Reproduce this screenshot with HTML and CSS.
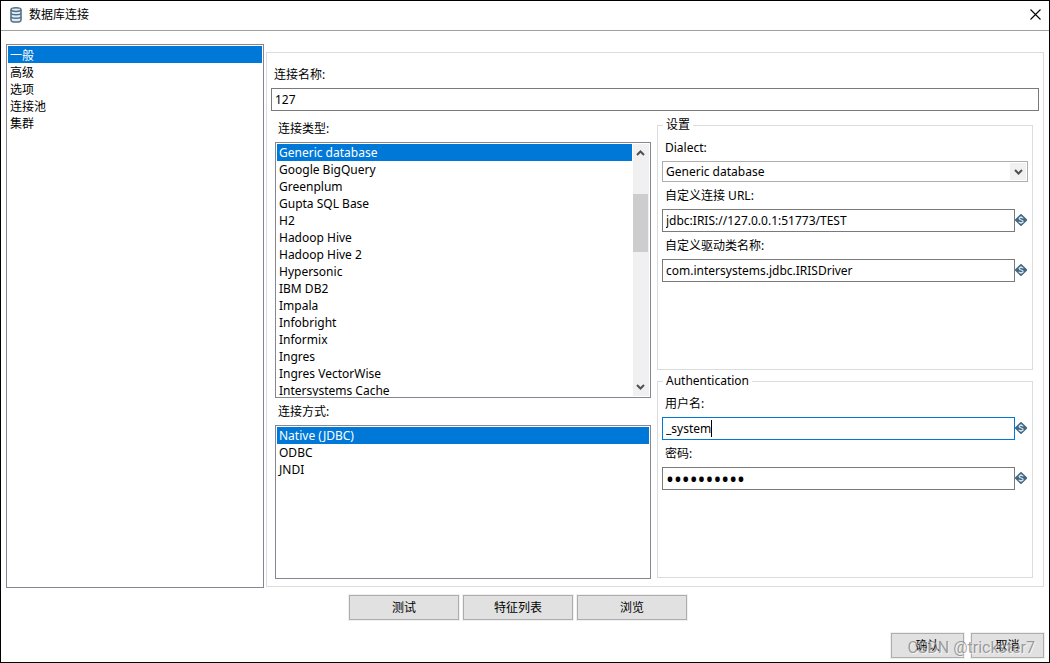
FILE: index.html
```html
<!DOCTYPE html>
<html lang="zh-CN">
<head>
<meta charset="utf-8">
<title>数据库连接</title>
<link rel="stylesheet" href="styles.css">
</head>
<body>
<svg class="defs" aria-hidden="true">
  <symbol id="variable" viewBox="0 0 13 13">
    <path d="M6 1 11.2 6 6 11 0.8 6Z" fill="#426883" stroke="#426883" stroke-width="1.8" stroke-linejoin="round"/>
    <path d="M8.2 4.4C7.8 3 4.1 2.9 4.1 4.6 4.1 6.3 8.1 5.7 8.1 7.4 8.1 9.1 4.4 9 3.8 7.7M6 2V3.4M6 8.6V10" fill="none" stroke="#dbe5ec" stroke-width="1.2"/>
  </symbol>
  <symbol id="down" viewBox="0 0 9 6"><path d="M1 1 4.5 4.5 8 1" fill="none" stroke="#505050" stroke-width="2"/></symbol>
  <symbol id="up" viewBox="0 0 9 6"><path d="M1 5 4.5 1.5 8 5" fill="none" stroke="#505050" stroke-width="2"/></symbol>
</svg>
<div class="window">
  <header class="titlebar">
    <svg class="db-icon" viewBox="0 0 12 16" aria-hidden="true">
      <path d="M1 2.8V13.2C1 15.6 11 15.6 11 13.2V2.8" fill="#e4ebf0" stroke="#4d7089" stroke-width="1.5"/>
      <ellipse cx="6" cy="2.6" rx="5" ry="1.8" fill="#e4ebf0" stroke="#4d7089" stroke-width="1.5"/>
      <path d="M1 6.2C1 8.2 11 8.2 11 6.2M1 9.8C1 11.8 11 11.8 11 9.8" fill="none" stroke="#4d7089" stroke-width="1.5"/>
    </svg>
    <h1 class="title">数据库连接</h1>
    <button class="close" type="button" aria-label="关闭">
      <svg viewBox="0 0 11 11" aria-hidden="true"><path d="M0.5 0.5 10.5 10.5M10.5 0.5 0.5 10.5" stroke="#000" stroke-width="1.1"/></svg>
    </button>
  </header>
  <main class="content">
    <select class="list nav" size="5" aria-label="类别">
      <option selected>一般</option>
      <option>高级</option>
      <option>选项</option>
      <option>连接池</option>
      <option>集群</option>
    </select>
    <section class="panel">
      <label class="label" for="name">连接名称:</label>
      <input class="field" id="name" type="text" value="127">
      <div class="columns">
        <div class="types">
          <label class="label" for="type">连接类型:</label>
          <div class="listbox type-box">
            <select class="list" id="type" size="14">
              <option selected>Generic database</option>
              <option>Google BigQuery</option>
              <option>Greenplum</option>
              <option>Gupta SQL Base</option>
              <option>H2</option>
              <option>Hadoop Hive</option>
              <option>Hadoop Hive 2</option>
              <option>Hypersonic</option>
              <option>IBM DB2</option>
              <option>Impala</option>
              <option>Infobright</option>
              <option>Informix</option>
              <option>Ingres</option>
              <option>Ingres VectorWise</option>
              <option>Intersystems Cache</option>
            </select>
            <div class="scrollbar" aria-hidden="true">
              <svg class="chevron"><use href="#up"/></svg>
              <div class="track"><div class="thumb"></div></div>
              <svg class="chevron"><use href="#down"/></svg>
            </div>
          </div>
          <label class="label" for="access">连接方式:</label>
          <select class="list access" id="access" size="3">
            <option selected>Native (JDBC)</option>
            <option>ODBC</option>
            <option>JNDI</option>
          </select>
        </div>
        <div class="groups">
          <fieldset class="group settings">
            <legend>设置</legend>
            <label class="label" for="dialect">Dialect:</label>
            <div class="combo">
              <select id="dialect"><option>Generic database</option></select>
              <span class="combo-button"><svg class="chevron"><use href="#down"/></svg></span>
            </div>
            <label class="label" for="url">自定义连接 URL:</label>
            <div class="row">
              <input class="field" id="url" type="text" value="jdbc:IRIS://127.0.0.1:51773/TEST">
              <svg class="variable"><use href="#variable"/></svg>
            </div>
            <label class="label" for="driver">自定义驱动类名称:</label>
            <div class="row">
              <input class="field" id="driver" type="text" value="com.intersystems.jdbc.IRISDriver">
              <svg class="variable"><use href="#variable"/></svg>
            </div>
          </fieldset>
          <fieldset class="group auth">
            <legend>Authentication</legend>
            <label class="label" for="user">用户名:</label>
            <div class="row">
              <input class="field active" id="user" type="text" value="_system">
              <span class="caret"></span>
              <svg class="variable"><use href="#variable"/></svg>
            </div>
            <label class="label" for="password">密码:</label>
            <div class="row">
              <input class="field password" id="password" type="password" value="0123456789">
              <svg class="variable"><use href="#variable"/></svg>
            </div>
          </fieldset>
        </div>
      </div>
    </section>
  </main>
  <div class="actions">
    <button class="button wide" type="button">测试</button>
    <button class="button wide" type="button">特征列表</button>
    <button class="button wide" type="button">浏览</button>
  </div>
  <footer class="footer">
    <button class="button" type="button">确认</button>
    <button class="button" type="button">取消</button>
    <span class="watermark">CSDN @trickster7</span>
  </footer>
</div>
</body>
</html>
```
FILE: styles.css
```css
* { box-sizing: border-box; }
body {
  margin: 0;
  background: #fff;
  color: #000;
  font: 12px/18px "Noto Sans", "Noto Sans CJK SC", sans-serif;
}
button, input, select { font: inherit; color: inherit; margin: 0; border-radius: 0; }
.defs { position: absolute; width: 0; height: 0; }
.window {
  display: flex;
  flex-direction: column;
  min-height: 100vh;
  border: 1px solid #000;
}
.titlebar {
  display: flex;
  align-items: center;
  height: 30px;
  padding: 0 8px 2px 9px;
  border-bottom: 1px solid #a0a0a0;
}
.db-icon { width: 12px; height: 16px; }
.title { flex: 1; margin: 0 0 0 7px; font-size: 12px; font-weight: 400; }
.close { display: flex; padding: 0; border: 0; background: none; }
.close svg { width: 11px; height: 11px; }

.content {
  flex: 1;
  display: grid;
  grid-template-columns: 258fr 778fr;
  gap: 2px;
  padding: 13px 5px 0;
}
.list {
  appearance: none;
  display: block;
  width: 100%;
  height: auto;
  min-height: 0;
  padding: 1px;
  border: 1px solid #828790;
  background: #fff;
  overflow: hidden;
  outline: 0;
}
.list option { height: 17px; min-height: 17px; padding: 0 2px; line-height: 17px; }
.list option:checked {
  background: linear-gradient(#0078d7, #0078d7);
  -webkit-text-fill-color: #fff;
}
.panel {
  display: flex;
  flex-direction: column;
  margin: 8px 0 1px;
  padding: 13px 4px 7px;
  border: 1px solid #dcdcdc;
}
.label { display: block; margin-bottom: 4px; padding-left: 3px; }
.field {
  display: block;
  width: 100%;
  height: 23px;
  padding: 0 3px;
  border: 1px solid #7a7a7a;
  background: #fff;
  outline: 0;
}
.columns {
  flex: 1;
  display: grid;
  grid-template-columns: 1fr 1fr;
  gap: 6px;
  margin: 5px 6px 0 4px;
}
.types { display: flex; flex-direction: column; padding-top: 4px; }
.listbox { display: flex; border: 1px solid #828790; padding: 1px; margin-bottom: 5px; }
.type-box { flex: 257 1 0; min-height: 0; }
.type-box .list { flex: 1; padding: 0; border: 0; height: 252px; }
.access { flex: 153 1 0; }
.scrollbar {
  display: flex;
  flex-direction: column;
  align-items: center;
  width: 17px;
  padding: 6px 2px 6px 0;
  background: #f0f0f0;
  border-left: 1px solid #fff;
}
.chevron { width: 9px; height: 6px; flex: none; }
.track { flex: 1; width: 15px; padding-top: 38px; }
.thumb { height: 58px; background: #cdcdcd; }

.groups { display: flex; flex-direction: column; gap: 2px; padding-bottom: 1px; }
.group { min-width: 0; margin: 0; padding: 5px 4px 0; border: 1px solid #dcdcdc; }
.settings { flex: 255 1 0; }
.auth { flex: 205 1 0; }
legend { margin-left: 1px; padding: 0 3px; }
.row { position: relative; display: flex; align-items: center; margin-bottom: 5px; }
.row .field { flex: 1; min-width: 0; }
.row .password { font-size: 21px; }
.variable { width: 13px; height: 13px; flex: none; }
.active { border-color: #0078d7; }
.caret { position: absolute; left: 49px; top: 3px; width: 1px; height: 17px; background: #000; }
.combo { position: relative; margin-bottom: 5px; }
.combo select {
  appearance: none;
  display: block;
  width: 100%;
  height: 21px;
  padding: 0 20px 0 3px;
  border: 1px solid #adadad;
  background: #fff;
}
.combo-button {
  position: absolute;
  top: 2px;
  right: 2px;
  bottom: 2px;
  width: 16px;
  display: flex;
  align-items: center;
  justify-content: center;
  background: #f0f0f0;
  pointer-events: none;
}

.button {
  width: 73px;
  height: 25px;
  padding: 0;
  border: 1px solid #adadad;
  outline: 1px solid #f0f0f0;
  background: #e1e1e1;
}
.wide { width: 110px; }
.actions { display: flex; justify-content: center; gap: 4px; padding: 7px 14px 0 0; }
.footer {
  position: relative;
  display: flex;
  justify-content: flex-end;
  gap: 7px;
  padding: 13px 5px 4px;
}
.watermark {
  position: absolute;
  right: 14px;
  bottom: 5px;
  color: rgba(120, 120, 120, 0.7);
  font: 16px/18px Roboto, sans-serif;
  text-shadow: 1px 1px 0 rgba(255, 255, 255, 0.6);
  pointer-events: none;
}
```
